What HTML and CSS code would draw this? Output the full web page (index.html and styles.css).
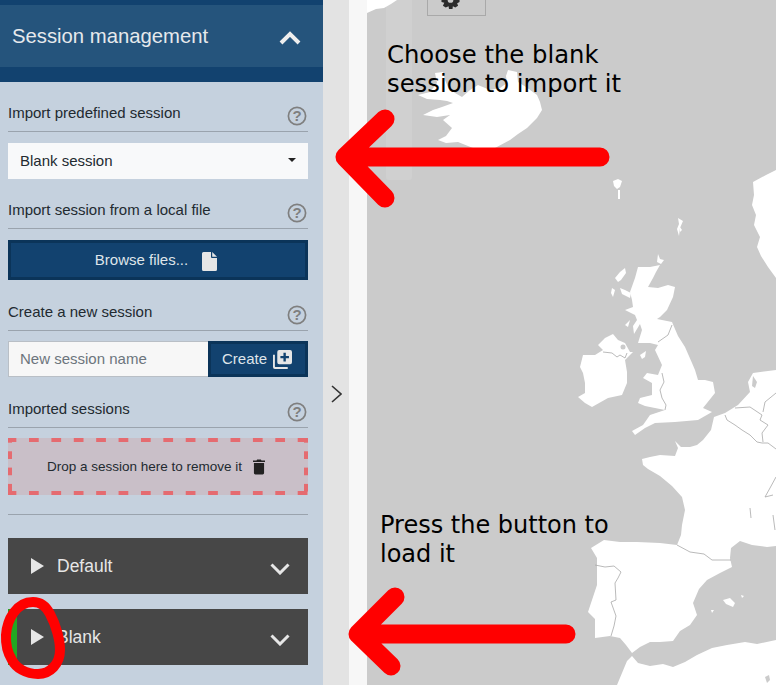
FILE: index.html
```html
<!DOCTYPE html>
<html lang="en">
<head>
    <meta charset="UTF-8">
    <meta name="viewport" content="width=device-width, initial-scale=1.0">
    <title>Session management</title>
    <link rel="stylesheet" href="styles.css">
</head>
<body>
    <div class="app">
        <aside class="sidebar">
            <header class="side-header">
                <div class="side-title">
                    <h1>Session management</h1>
                    <svg class="collapse-icon" viewBox="0 0 22 14"><path d="M2 12 L11 3 L20 12" /></svg>
                </div>
            </header>

            <div class="side-body">
                <div class="field-label">
                    <span>Import predefined session</span>
                    <svg class="help-icon" viewBox="0 0 20 20"><circle cx="10" cy="10" r="8.6" /><text x="10" y="15.2" text-anchor="middle">?</text></svg>
                </div>
                <div class="select-box">
                    <span>Blank session</span>
                    <span class="caret"></span>
                </div>

                <div class="field-label">
                    <span>Import session from a local file</span>
                    <svg class="help-icon" viewBox="0 0 20 20"><circle cx="10" cy="10" r="8.6" /><text x="10" y="15.2" text-anchor="middle">?</text></svg>
                </div>
                <button class="btn-browse">
                    <span>Browse files...</span>
                    <svg class="file-icon" viewBox="0 0 15 19"><path d="M1.5 0 H9 V5 Q9 6 10 6 H15 V17.5 Q15 19 13.5 19 H1.5 Q0 19 0 17.5 V1.5 Q0 0 1.5 0 Z M10.2 0 L15 4.8 H10.2 Z" /></svg>
                </button>

                <div class="field-label field-label-low">
                    <span>Create a new session</span>
                    <svg class="help-icon" viewBox="0 0 20 20"><circle cx="10" cy="10" r="8.6" /><text x="10" y="15.2" text-anchor="middle">?</text></svg>
                </div>
                <div class="create-row">
                    <input class="session-input" type="text" placeholder="New session name">
                    <button class="btn-create">
                        <span>Create</span>
                        <svg class="create-icon" viewBox="0 0 20 20"><path d="M6.5 0 H18 Q20 0 20 2 V13 Q20 15 18 15 H6.5 Q4.5 15 4.5 13 V2 Q4.5 0 6.5 0 Z M11 3 V6.2 H7.8 V8.8 H11 V12 H13.5 V8.8 H16.8 V6.2 H13.5 V3 Z" fill-rule="evenodd" /><path d="M0 5 H2 V17 Q2 18 3 18 H15.5 V20 H2 Q0 20 0 18 Z" /></svg>
                    </button>
                </div>

                <div class="field-label field-label-low">
                    <span>Imported sessions</span>
                    <svg class="help-icon" viewBox="0 0 20 20"><circle cx="10" cy="10" r="8.6" /><text x="10" y="15.2" text-anchor="middle">?</text></svg>
                </div>
                <div class="drop-zone">
                    <span>Drop a session here to remove it</span>
                    <svg class="trash-icon" viewBox="0 0 13 16"><path d="M4.5 0 H8.5 L9.2 1 H13 V2.6 H0 V1 H3.8 Z M1 3.6 H12 V14.5 Q12 16 10.5 16 H2.5 Q1 16 1 14.5 Z" /></svg>
                </div>

                <hr class="divider">

                <div class="session-card">
                    <svg class="play-icon" viewBox="0 0 13 16"><path d="M0 0 L13 8 L0 16 Z" /></svg>
                    <span class="session-name">Default</span>
                    <svg class="expand-icon" viewBox="0 0 20 12"><path d="M1.5 1.5 L10 10 L18.5 1.5" /></svg>
                </div>
                <div class="session-card session-active">
                    <svg class="play-icon" viewBox="0 0 13 16"><path d="M0 0 L13 8 L0 16 Z" /></svg>
                    <span class="session-name">Blank</span>
                    <svg class="expand-icon" viewBox="0 0 20 12"><path d="M1.5 1.5 L10 10 L18.5 1.5" /></svg>
                </div>
            </div>
        </aside>

        <div class="gutter">
            <svg class="toggle-icon" viewBox="0 0 11 18"><path d="M1 1 L10 9 L1 17" /></svg>
        </div>
        <div class="map-edge"></div>

        <main class="map">
            <svg class="map-land" viewBox="367 0 409 685">
                <!-- Greenland corner -->
                <path class="land" d="M367 0 H397 L391 4 L384 8 L376 9 L367 13 Z" />
                <!-- Iceland -->
                <path class="land" d="M435 73 L443 72 L445 80 L448 87 L455 93 L462 97 L470 90 L478 85 L490 90 L500 88 L507 83 L506 76 L508 70 L517 72 L518 82 L526 87 L537 95 L540 102 L542 110 L537 118 L527 128 L518 134 L510 140 L495 148 L473 148 L458 142 L446 143 L438 140 L446 136 L452 128 L443 120 L450 115 L437 117 L423 115 L433 110 L442 107 L453 103 L447 101 L440 100 L427 99 L418 95 L430 92 L437 83 Z" />
                <!-- Faroes, Shetland, Orkney -->
                <path class="land" d="M613 181 L618 179 L622 181 L620 187 L617 189 L614 186 Z M618 190 H620 V199 H618 Z" />
                <path class="land" d="M678 218 L683 221 L680 228 L679 236 L677 229 L679 224 Z M680 227 L682 230 L680 232 Z" />
                <path class="land" d="M658 254 L660 259 L664 260 L661 264 L657 262 Z" />
                <!-- Norway -->
                <path class="land" d="M776 170 L766 175 L753 182 L754 195 L752 205 L756 215 L754 225 L760 237 L757 247 L761 256 L768 267 L776 278 Z" />
                <!-- Britain -->
                <path class="land" d="M638 267 L650 267 L660 265 L656 272 L653 278 L648 287 L658 288 L668 285 L675 287 L673 297 L667 310 L660 317 L657 319 L672 322 L678 336 L685 347 L692 363 L695 370 L698 380 L705 380 L713 382 L715 393 L703 408 L712 412 L698 420 L675 422 L655 423 L645 428 L635 435 L632 431 L643 425 L650 415 L665 410 L655 408 L645 406 L638 403 L640 398 L652 395 L652 383 L643 378 L647 373 L658 375 L662 365 L655 350 L658 345 L650 343 L638 343 L642 330 L640 324 L634 334 L633 326 L637 320 L635 315 L625 310 L633 307 L632 300 L630 292 L635 278 Z" />
                <path class="land" d="M625 268 L626 273 L621 280 L618 282 L615 278 L620 272 Z M612 288 L615 290 L613 297 L611 293 Z M620 288 L625 290 L631 293 L630 298 L626 296 L622 294 Z M625 325 L630 320 L628 327 Z M640 355 L646 351 L645 357 L642 359 Z" />
                <!-- Ireland -->
                <path class="land" d="M598 345 L605 338 L613 334 L618 340 L625 343 L630 352 L633 352 L625 360 L627 372 L627 383 L622 395 L608 398 L592 407 L585 403 L578 397 L585 393 L585 383 L583 373 L580 367 L583 355 L595 355 L603 350 Z" />
                <circle class="sea" cx="623" cy="347" r="2.5" />
                <!-- France, Spain and the east -->
                <path class="land" d="M642 459 L650 457 L660 455 L675 456 L678 448 L675 441 L681 447 L690 447 L697 445 L703 440 L711 430 L714 417 L725 413 L738 405 L750 392 L748 382 L753 373 L776 370 V546 L767 547 L752 545 L740 541 L731 548 L730 558 L732 567 L720 573 L707 580 L699 589 L693 603 L697 615 L690 625 L680 631 L673 641 L660 642 L650 642 L640 647 L632 653 L626 645 L620 638 L610 636 L595 638 L595 619 L588 612 L591 603 L597 585 L597 558 L591 548 L604 540 L620 542 L637 542 L660 543 L677 545 L681 535 L682 525 L685 510 L682 497 L672 486 L660 476 L648 469 L643 465 Z" />
                <path class="sea" d="M753 376 L757 382 L755 388 L752 386 Z" />
                <!-- Africa -->
                <path class="land" d="M627 661 L632 656 L638 663 L650 666 L663 664 L673 667 L685 662 L697 655 L712 648 L727 645 L745 642 L757 644 L776 640 V685 L617 685 Z" />
                <!-- Balearics, small lake in the south -->
                <path class="land" d="M723 600 L730 598 L735 603 L733 607 L726 604 Z M741 595 L744 596 L742 598 Z M711 610 L714 610 L712 613 Z" />
                <path class="sea" d="M765 677 L769 675 L770 680 L767 683 Z" />
                <!-- borders -->
                <path class="border" d="M672 325 L668 335 L658 342 M603 352 L612 353 L617 357 L620 355 L625 358 L627 353 M662 373 L664 382 L660 390 L662 398 L666 405 L665 410" />
                <path class="border" d="M595 565 L600 566 L605 567 L614 566 L621 572 L618 578 L615 583 L616 600 L611 602 L616 616 L614 626 L611 636 M677 545 L690 552 L704 554 L712 560 L722 560 L731 560" />
                <path class="border" d="M725 415 L727 420 L735 425 L742 430 L750 435 L757 442 L762 443 L768 443 L776 449 M735 408 L750 407 L762 415 L760 420 L768 425 L762 433 L763 442 M776 393 L765 402 L763 412 M776 477 L770 488 L765 497 L773 495 M750 508 L751 518 M773 515 L775 530" />
            </svg>
            <div class="map-rail"></div>
            <div class="map-tool">
                <svg class="gear-icon" viewBox="0 10 20 10"><path d="M.5 10 H7 A3 3 0 0 0 13 10 H19.5 V12 L17 13.5 L18 16 L15 18 L12.5 16.5 L12 20 H8.5 L8 16.5 L5 18 L2 16 L3.5 13 L.5 12 Z" /></svg>
            </div>
        </main>
    </div>

    <!-- tutorial marks drawn on top of the screenshot -->
    <p class="note note-top">Choose the blank<br>session to import it</p>
    <p class="note note-bottom">Press the button to<br>load it</p>
    <svg class="marks" viewBox="0 0 776 685">
        <path d="M600 157 H345 M385 119 L345 157 L385 198" />
        <path d="M566 634 H358 M395 597 L358 634 L391 666" />
        <path class="ring" d="M33 602 C42 602 47 608 50 614 C56 625 60 640 60 650 C60 664 50 674 38 674 C26 674 16 668 12 660 C7 652 5.5 645 6 635 C7 620 16 602 33 602 Z" />
    </svg>
</body>
</html>
```

FILE: styles.css
```css
/* General Styles */
body {
    font-family: 'Liberation Sans', Arial, sans-serif;
    margin: 0;
    padding: 0;
    background-color: #e3e3e3;
    color: #222a30;
}

.app {
    display: flex;
    width: 776px;
    height: 685px;
    overflow: hidden;
}

/* Sidebar */
.sidebar {
    width: 323px;
    flex-shrink: 0;
    background-color: #c5d1de;
}

.side-header {
    background-color: #12426f;
    padding: 5px 0 15px;
}

.side-title {
    display: flex;
    align-items: center;
    justify-content: space-between;
    height: 62px;
    padding: 0 22px 0 12px;
    background-color: #25547c;
}

.side-title h1 {
    margin: 0;
    font-size: 20.3px;
    font-weight: normal;
    color: #e6e9ec;
}

.collapse-icon {
    width: 22px;
    height: 14px;
    margin-top: 4px;
    fill: none;
    stroke: #eeeeee;
    stroke-width: 4;
}

.side-body {
    padding: 0 15px 0 8px;
}

.field-label {
    display: flex;
    align-items: flex-end;
    justify-content: space-between;
    height: 50px;
    padding-bottom: 10px;
    box-sizing: border-box;
    border-bottom: 1px solid #9aa3ad;
    font-size: 15px;
    margin-bottom: 11px;
}

.field-label-low {
    height: 51px;
    margin-bottom: 10px;
}

.help-icon {
    width: 20px;
    height: 20px;
    margin-right: 1px;
    margin-bottom: -5px;
    fill: none;
    stroke: #7f7f7f;
    stroke-width: 1.7;
}

.help-icon text {
    font-family: 'Liberation Sans', sans-serif;
    font-size: 15px;
    font-weight: bold;
    fill: #7f7f7f;
    stroke: none;
}

.select-box {
    display: flex;
    align-items: center;
    justify-content: space-between;
    height: 36px;
    padding: 0 12px 2px;
    box-sizing: border-box;
    background-color: #f8f9fa;
    font-size: 15px;
}

.caret {
    width: 0;
    height: 0;
    border-left: 4px solid transparent;
    border-right: 4px solid transparent;
    border-top: 4px solid #222222;
}

.btn-browse {
    display: flex;
    align-items: center;
    justify-content: center;
    gap: 14px;
    width: 100%;
    height: 40px;
    padding: 0 4px 2px 0;
    background-color: #12426f;
    border: 3px solid #0b3459;
    color: #dfe5ea;
    font-family: inherit;
    font-size: 15px;
}

.file-icon {
    width: 15px;
    height: 19px;
    margin-top: 4px;
    fill: #e6e6e6;
}

.create-row {
    display: flex;
    height: 36px;
}

.session-input {
    flex: 1;
    min-width: 0;
    padding: 0 11px 2px;
    box-sizing: border-box;
    background-color: #f7f7f7;
    border: 1px solid #b9bfc6;
    border-right: none;
    border-radius: 0;
    font-family: inherit;
    font-size: 15px;
}

.session-input::placeholder {
    color: #6c757d;
    opacity: 1;
}

.btn-create {
    display: flex;
    align-items: center;
    justify-content: center;
    gap: 6px;
    width: 100px;
    padding: 0 2px 2px 0;
    background-color: #12426f;
    border: 3px solid #0b3459;
    color: #dfe5ea;
    font-family: inherit;
    font-size: 15px;
}

.create-icon {
    width: 19px;
    height: 19px;
    margin-top: 2px;
    fill: #e6e6e6;
}

/* dash length and period are not what a dashed border gives, so gradients */
.drop-zone {
    display: flex;
    align-items: center;
    justify-content: center;
    gap: 11px;
    height: 57px;
    padding-right: 4px;
    box-sizing: border-box;
    background-color: #c9bfc8;
    background-image:
        linear-gradient(to right, #e56b70 10px, transparent 10px),
        linear-gradient(to right, #e56b70 10px, transparent 10px),
        linear-gradient(to bottom, #e56b70 8px, transparent 8px),
        linear-gradient(to bottom, #e56b70 8px, transparent 8px);
    background-size: 22.4px 4px, 22.4px 4px, 4px 16.3px, 4px 16.3px;
    background-position: -1.4px 0, -1.4px 100%, 0 -3px, 100% -3px;
    background-repeat: repeat-x, repeat-x, repeat-y, repeat-y;
    font-size: 13.5px;
}

.trash-icon {
    width: 12px;
    height: 16px;
    fill: #222222;
}

.divider {
    margin: 19px 0 23px;
    border: none;
    border-top: 1px solid #9aa3ad;
}

/* Session cards */
.session-card {
    display: flex;
    align-items: center;
    height: 56px;
    box-sizing: border-box;
    padding: 0 18px 0 23px;
    margin-bottom: 15px;
    background-color: #474747;
    color: #e6e6e6;
    font-size: 17.5px;
}

.session-active {
    border-left: 9px solid #22a722;
    padding-left: 14px;
}

.play-icon {
    width: 13px;
    height: 16px;
    fill: #e6e6e6;
}

.session-name {
    flex: 1;
    margin-left: 13px;
}

.expand-icon {
    width: 20px;
    height: 12px;
    margin-top: 6px;
    fill: none;
    stroke: #e6e6e6;
    stroke-width: 3;
}

/* Gutter between sidebar and map */
.gutter {
    display: flex;
    align-items: center;
    justify-content: center;
    width: 26px;
    flex-shrink: 0;
    background-color: #e3e3e3;
}

.toggle-icon {
    width: 11px;
    height: 18px;
    margin-top: 103px;
    fill: none;
    stroke: #333333;
    stroke-width: 1.6;
}

.map-edge {
    width: 18px;
    flex-shrink: 0;
    background-color: #f7f7f7;
}

/* Map */
.map {
    position: relative;
    flex: 1;
    background-color: #cbcbcb;
    overflow: hidden;
}

.map-land {
    display: block;
    width: 409px;
    height: 685px;
}

.land {
    fill: #ffffff;
}

.sea {
    fill: #cbcbcb;
}

.border {
    fill: none;
    stroke: #a8a8a8;
    stroke-width: 0.8;
}

.map-rail {
    position: absolute;
    top: 0;
    left: 19px;
    width: 26px;
    height: 180px;
    border-radius: 0 0 3px 3px;
    background-color: rgba(255, 255, 255, 0.1);
}

.map-tool {
    position: absolute;
    top: -14px;
    left: 60px;
    display: flex;
    align-items: flex-end;
    width: 59px;
    height: 30px;
    padding: 0 0 6px 13px;
    box-sizing: border-box;
    border: 1px solid #a9a9a9;
}

.gear-icon {
    width: 19px;
    height: 9.5px;
    fill: #2c2c2c;
}

/* Tutorial notes */
.note {
    position: absolute;
    margin: 0;
    font-family: 'DejaVu Sans', sans-serif;
    font-size: 24px;
    line-height: 29px;
    color: #000000;
}

.note-top {
    top: 40px;
    left: 387px;
    font-size: 24.3px;
}

.note-bottom {
    top: 511px;
    left: 380px;
}

.marks {
    position: absolute;
    top: 0;
    left: 0;
    width: 776px;
    height: 685px;
    fill: none;
    stroke: #ff0000;
    stroke-width: 19;
    stroke-linecap: round;
    stroke-linejoin: round;
    pointer-events: none;
}

.marks .ring {
    stroke-width: 10;
}
```
